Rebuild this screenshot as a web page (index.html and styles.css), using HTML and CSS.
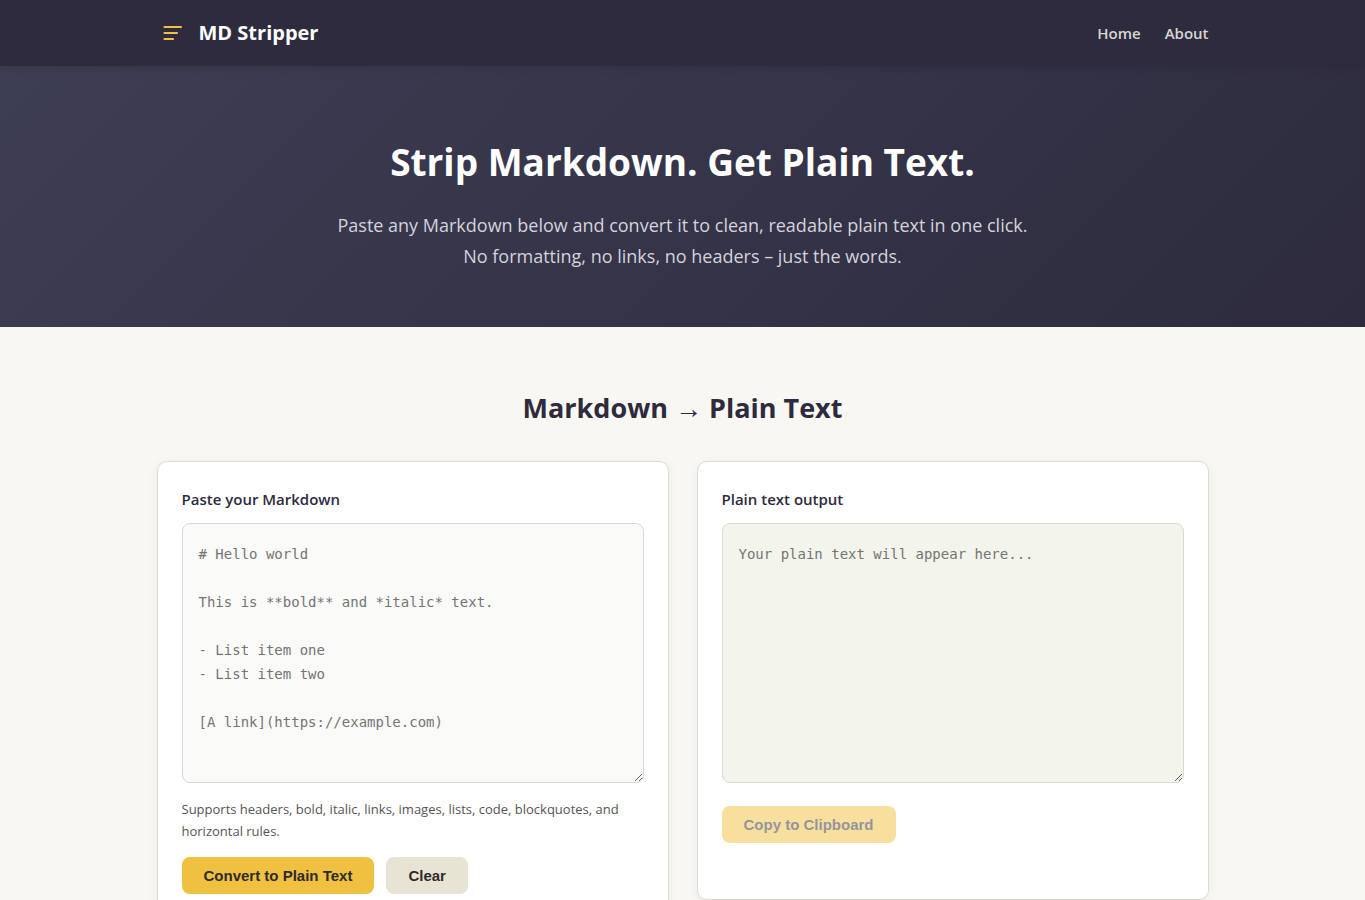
FILE: index.html
```html
<!DOCTYPE html>
<html lang="en">
<head>
    <meta charset="UTF-8">
    <meta name="viewport" content="width=device-width, initial-scale=1.0">
    <title>MD Stripper</title>
    <link rel="stylesheet" href="styles.css">
</head>
<body>
    <header class="site-header">
        <div class="container header-inner">
            <a href="#" class="logo">
                <svg class="logo-icon" viewBox="0 0 30 30" fill="none" stroke="currentColor" stroke-width="2.2" stroke-linecap="round" aria-hidden="true">
                    <path d="M7.500 9h16.500M7.500 15h12.500M7.500 21h8.500"/>
                </svg>
                <span>MD Stripper</span>
            </a>
            <nav class="site-nav">
                <a href="#">Home</a>
                <a href="#about">About</a>
            </nav>
        </div>
    </header>

    <main>
        <section class="hero">
            <div class="container">
                <h1>Strip Markdown. Get Plain Text.</h1>
                <p>Paste any Markdown below and convert it to clean, readable plain text in one click.<br>No formatting, no links, no headers – just the words.</p>
            </div>
        </section>

        <section class="tool">
            <div class="container">
                <h2>Markdown → Plain Text</h2>
                <div class="panels">
                    <div class="panel">
                        <label for="input">Paste your Markdown</label>
                        <textarea id="input" spellcheck="false" placeholder="# Hello world&#10;&#10;This is **bold** and *italic* text.&#10;&#10;- List item one&#10;- List item two&#10;&#10;[A link](https://example.com)"></textarea>
                        <p class="hint">Supports headers, bold, italic, links, images, lists, code, blockquotes, and horizontal rules.</p>
                        <div class="actions">
                            <button type="button" class="btn btn-primary" id="convert">Convert to Plain Text</button>
                            <button type="button" class="btn btn-secondary" id="clear">Clear</button>
                        </div>
                    </div>
                    <div class="panel">
                        <label for="output">Plain text output</label>
                        <textarea id="output" class="output" readonly placeholder="Your plain text will appear here..."></textarea>
                        <div class="actions actions-output">
                            <button type="button" class="btn btn-primary" id="copy" disabled>Copy to Clipboard</button>
                        </div>
                        <p class="status" role="status"></p>
                    </div>
                </div>
            </div>
        </section>
    </main>
</body>
</html>
```
FILE: styles.css
```css
* {
    box-sizing: border-box;
    margin: 0;
    padding: 0;
}

body {
    background-color: #f8f7f2;
    color: #2d2b3d;
    font-family: "Open Sans", "Noto Sans", sans-serif;
    font-size: 16px;
}

.container {
    max-width: 1100px;
    margin: 0 auto;
    padding: 0 24px;
}

.site-header {
    position: relative;
    background-color: #2d2b3d;
    padding: 18px 0;
    box-shadow: 0 2px 8px rgba(0, 0, 0, 0.1);
}

.header-inner {
    display: flex;
    align-items: center;
    justify-content: space-between;
}

.logo {
    display: flex;
    align-items: center;
    gap: 12px;
    color: #ffffff;
    font-size: 20px;
    line-height: 30px;
    font-weight: 700;
    text-decoration: none;
}

.logo-icon {
    width: 30px;
    height: 30px;
    color: #f0c040;
}

.site-nav {
    display: flex;
    gap: 24px;
}

.site-nav a {
    color: #d8d6d0;
    font-size: 15px;
    font-weight: 600;
    text-decoration: none;
}

.site-nav a:hover {
    color: #f0c040;
}

.hero {
    background: linear-gradient(135deg, #3d3d54 0%, #2d2b3d 100%);
    color: #ffffff;
    padding: 72px 0 55px;
    text-align: center;
}

.hero h1 {
    font-size: 37px;
    line-height: 48px;
    margin-bottom: 24px;
}

.hero p {
    color: #d4d2dc;
    font-size: 18px;
    line-height: 31px;
}

.tool {
    padding: 60px 0;
}

.tool h2 {
    font-size: 27px;
    line-height: 42px;
    margin-bottom: 32px;
    text-align: center;
}

.panels {
    display: grid;
    grid-template-columns: 1fr 1fr;
    gap: 28px;
    align-items: start;
}

.panel {
    background-color: #ffffff;
    border: 1px solid #dcdcd4;
    border-radius: 10px;
    padding: 24px;
    box-shadow: 0 2px 12px rgba(0, 0, 0, 0.05);
}

.panel label {
    display: block;
    font-size: 15px;
    line-height: 26px;
    font-weight: 600;
    margin-bottom: 11px;
}

textarea {
    display: block;
    width: 100%;
    height: 260px;
    padding: 18px 16px;
    background-color: #fafaf8;
    border: 1px solid #d8d8d4;
    border-radius: 8px;
    font-family: "DejaVu Sans Mono", monospace;
    font-size: 14px;
    line-height: 24px;
    resize: vertical;
}

textarea:focus {
    outline: none;
    border-color: #f0c040;
}

textarea.output {
    background-color: #f3f4eb;
}

.hint {
    color: #555555;
    font-size: 13px;
    line-height: 22px;
    margin-top: 15px;
}

.actions {
    display: flex;
    flex-wrap: wrap;
    gap: 12px;
    margin-top: 15px;
}

.actions-output {
    margin-top: 23px;
}

.btn {
    padding: 10px 22px;
    border: none;
    border-radius: 8px;
    color: #2d2b2b;
    font-family: "Liberation Sans", Arial, sans-serif;
    font-size: 15px;
    line-height: 17px;
    font-weight: 700;
    cursor: pointer;
}

.btn-primary {
    background-color: #f0c040;
}

.btn-secondary {
    background-color: #e8e4d4;
}

.btn:disabled {
    color: #2d2b3d;
    opacity: 0.5;
    cursor: not-allowed;
}

.status {
    min-height: 24px;
    margin-top: 8px;
    font-size: 14px;
}

@media (max-width: 760px) {
    .panels {
        grid-template-columns: 1fr;
    }
}
```
